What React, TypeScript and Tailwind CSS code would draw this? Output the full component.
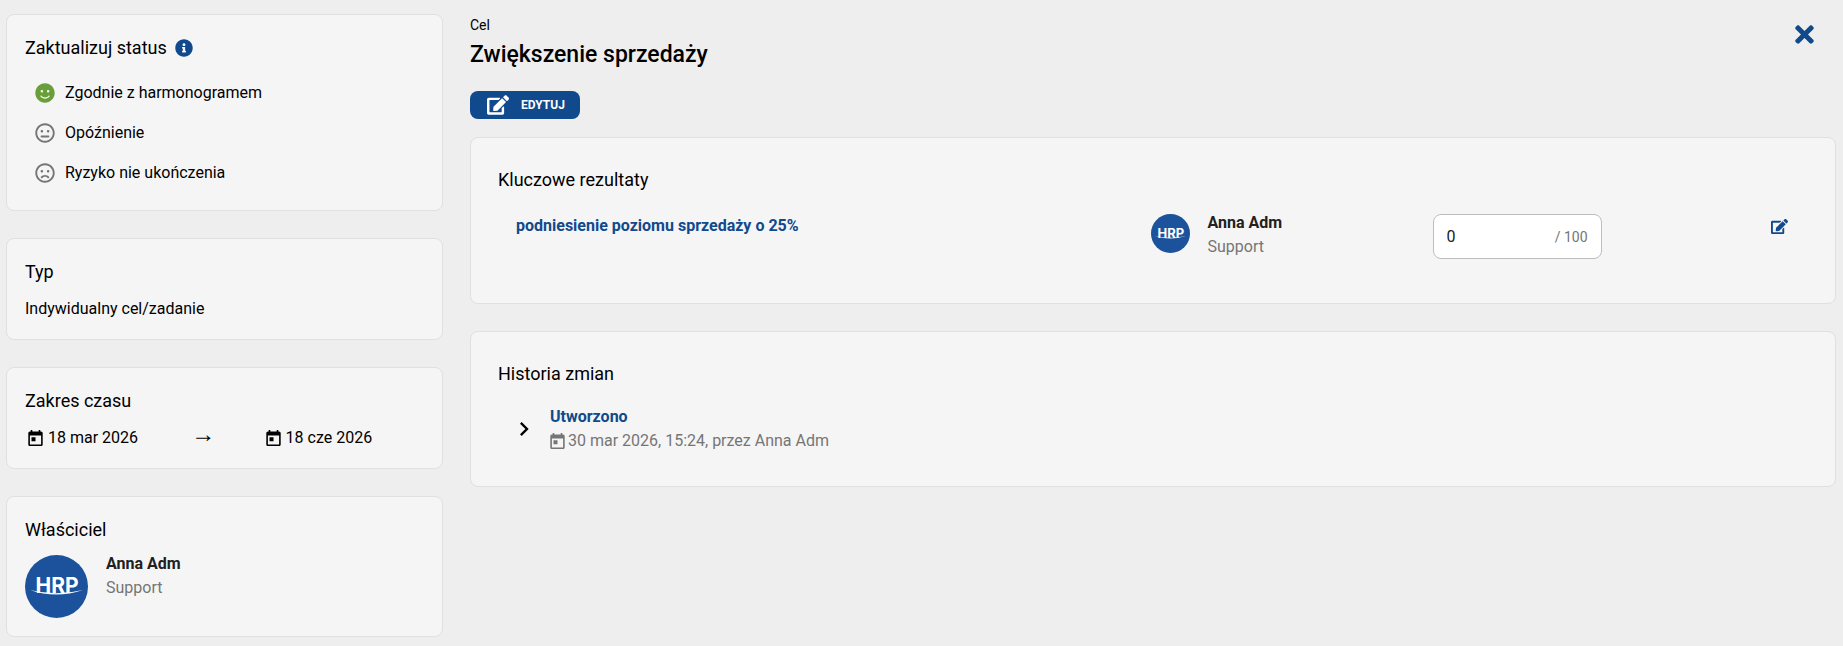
import { useState } from "react";
import type { ReactNode } from "react";
import {
  FaEdit,
  FaInfoCircle,
  FaRegFrown,
  FaRegMeh,
  FaRegSmile,
  FaFrown,
  FaMeh,
  FaSmile,
  FaTimes,
} from "react-icons/fa";
import { MdChevronRight } from "react-icons/md";

const statuses = [
  { id: "ok", label: "Zgodnie z harmonogramem", icon: FaRegSmile, active: FaSmile },
  { id: "delay", label: "Opóźnienie", icon: FaRegMeh, active: FaMeh },
  { id: "risk", label: "Ryzyko nie ukończenia", icon: FaRegFrown, active: FaFrown },
];

const TodayIcon = () => (
  <svg viewBox="3 1 18 20" className="h-4 w-[15px] shrink-0" fill="currentColor" aria-hidden="true">
    <path d="M19 3h-1V1h-2v2H8V1H6v2H5c-1.110 0-1.990.900-1.990 2L3 19c0 1.100.890 2 2 2h14c1.100 0 2-.900 2-2V5c0-1.100-.900-2-2-2zm0 16H5V8h14v11zM7 10h5v5H7z" />
  </svg>
);

const Avatar = ({ className }: { className: string }) => (
  <svg viewBox="0 0 63 63" className={className} role="img" aria-label="HRP">
    <circle cx="31.5" cy="31.5" r="31.5" fill="#1b529b" />
    <text
      x="32"
      y="38"
      textAnchor="middle"
      fontSize="21"
      fontWeight="700"
      fill="#fff"
      className="font-[Inter,sans-serif]"
    >
      HRP
    </text>
    <path d="M5 35Q31 44 58 35Q31 41.500 5 35Z" fill="#fff" />
  </svg>
);

const SideCard = ({ title, children }: { title: ReactNode; children: ReactNode }) => (
  <section className="rounded-lg border border-[#e0e0e0] bg-[#f5f5f5] px-[18px] pt-[19px] pb-[18px]">
    <h2 className="flex items-center gap-2 text-lg leading-7">{title}</h2>
    {children}
  </section>
);

const App = () => {
  const [status, setStatus] = useState("ok");
  const [value, setValue] = useState("0");
  const [open, setOpen] = useState(false);

  return (
    <div className="flex min-h-screen gap-[27px] bg-[#eeeeee] pl-1.5 pr-[7px] pt-3.5 font-[Roboto,sans-serif] text-base text-black">
      <aside className="flex w-[437px] shrink-0 flex-col gap-[27px]">
        <SideCard
          title={
            <>
              Zaktualizuj status
              <FaInfoCircle className="text-lg text-[#10498c]" />
            </>
          }
        >
          <div className="mt-[11px] flex flex-col gap-px pl-2.5">
            {statuses.map((item) => {
              const selected = status === item.id;
              const Icon = selected ? item.active : item.icon;
              return (
                <button
                  key={item.id}
                  type="button"
                  aria-pressed={selected}
                  onClick={() => setStatus(item.id)}
                  className="flex h-[39px] cursor-pointer items-center gap-2.5 text-left"
                >
                  <Icon className={selected ? "text-xl text-[#689f38]" : "text-xl text-[#757575]"} />
                  {item.label}
                </button>
              );
            })}
          </div>
        </SideCard>

        <SideCard title="Typ">
          <p className="mt-[11px]">Indywidualny cel/zadanie</p>
        </SideCard>

        <SideCard title="Zakres czasu">
          <div className="mt-[11px] grid h-6 grid-cols-[33fr_15fr_32fr] items-center pl-[3px]">
            <span className="flex items-center gap-[5px]">
              <TodayIcon />
              18 mar 2026
            </span>
            <span className="self-start font-['Liberation_Serif',serif] text-2xl leading-4">→</span>
            <span className="flex items-center gap-[5px]">
              <TodayIcon />
              18 cze 2026
            </span>
          </div>
        </SideCard>

        <SideCard title="Właściciel">
          <div className="mt-2 flex gap-[18px]">
            <Avatar className="mt-[3px] size-[63px]" />
            <div>
              <p className="font-bold text-[#212121]">Anna Adm</p>
              <p className="text-[#757575]">Support</p>
            </div>
          </div>
        </SideCard>
      </aside>

      <main className="min-w-0 flex-1">
        <header className="flex items-start justify-between pr-[18px]">
          <div>
            <p className="mt-px text-sm">Cel</p>
            <h1 className="mt-1 text-[23px] leading-8 font-medium">Zwiększenie sprzedaży</h1>
            <button
              type="button"
              className="mt-5 flex h-7 w-[110px] cursor-pointer items-center gap-3 rounded-lg bg-[#10498c] pl-[17px] text-xs font-bold text-white"
            >
              <FaEdit className="text-[22px]" />
              EDYTUJ
            </button>
          </div>
          <button type="button" aria-label="Zamknij" className="mt-[7px] cursor-pointer text-[#10498c]">
            <FaTimes className="text-[27px]" />
          </button>
        </header>

        <section className="mt-[18px] rounded-lg border border-[#e0e0e0] bg-[#f5f5f5] px-[27px] pt-7 pb-11">
          <h2 className="text-lg leading-7">Kluczowe rezultaty</h2>
          <div className="mt-[17px] grid grid-cols-[45fr_20fr_24fr_auto] items-start pl-[18px] pr-5">
            <a href="#rezultat" className="mt-[3px] font-bold text-[#10498c]">
              podniesienie poziomu sprzedaży o 25%
            </a>
            <div className="flex gap-[18px]">
              <Avatar className="mt-[3px] size-[39px]" />
              <div>
                <p className="font-bold text-[#212121]">Anna Adm</p>
                <p className="text-[#757575]">Support</p>
              </div>
            </div>
            <label className="mt-[3px] flex h-[45px] w-[169px] items-center rounded-lg border border-[#bdbdbd] bg-white px-[13px]">
              <input
                type="text"
                aria-label="Wartość"
                value={value}
                onChange={(e) => setValue(e.target.value)}
                className="w-full min-w-0 flex-1 text-[#212121] outline-none"
              />
              <span className="whitespace-nowrap text-sm text-[#757575]">/ 100</span>
            </label>
            <button type="button" aria-label="Edytuj rezultat" className="mt-[7px] cursor-pointer text-[#10498c]">
              <FaEdit className="text-[17px]" />
            </button>
          </div>
        </section>

        <section className="mt-[27px] rounded-lg border border-[#e0e0e0] bg-[#f5f5f5] px-[27px] pt-7 pb-[33px]">
          <h2 className="text-lg leading-7">Historia zmian</h2>
          <div className="mt-[17px] flex items-center gap-3 pl-3">
            <button
              type="button"
              aria-label="Rozwiń"
              aria-expanded={open}
              onClick={() => setOpen(!open)}
              className="cursor-pointer"
            >
              <MdChevronRight className="text-[28px]" />
            </button>
            <div>
              <p className="font-bold text-[#10498c]">Utworzono</p>
              <p className="flex items-center gap-[3px] text-[#757575]">
                <TodayIcon />
                30 mar 2026, 15:24, przez Anna Adm
              </p>
            </div>
          </div>
        </section>
      </main>
    </div>
  );
};

export default App;
